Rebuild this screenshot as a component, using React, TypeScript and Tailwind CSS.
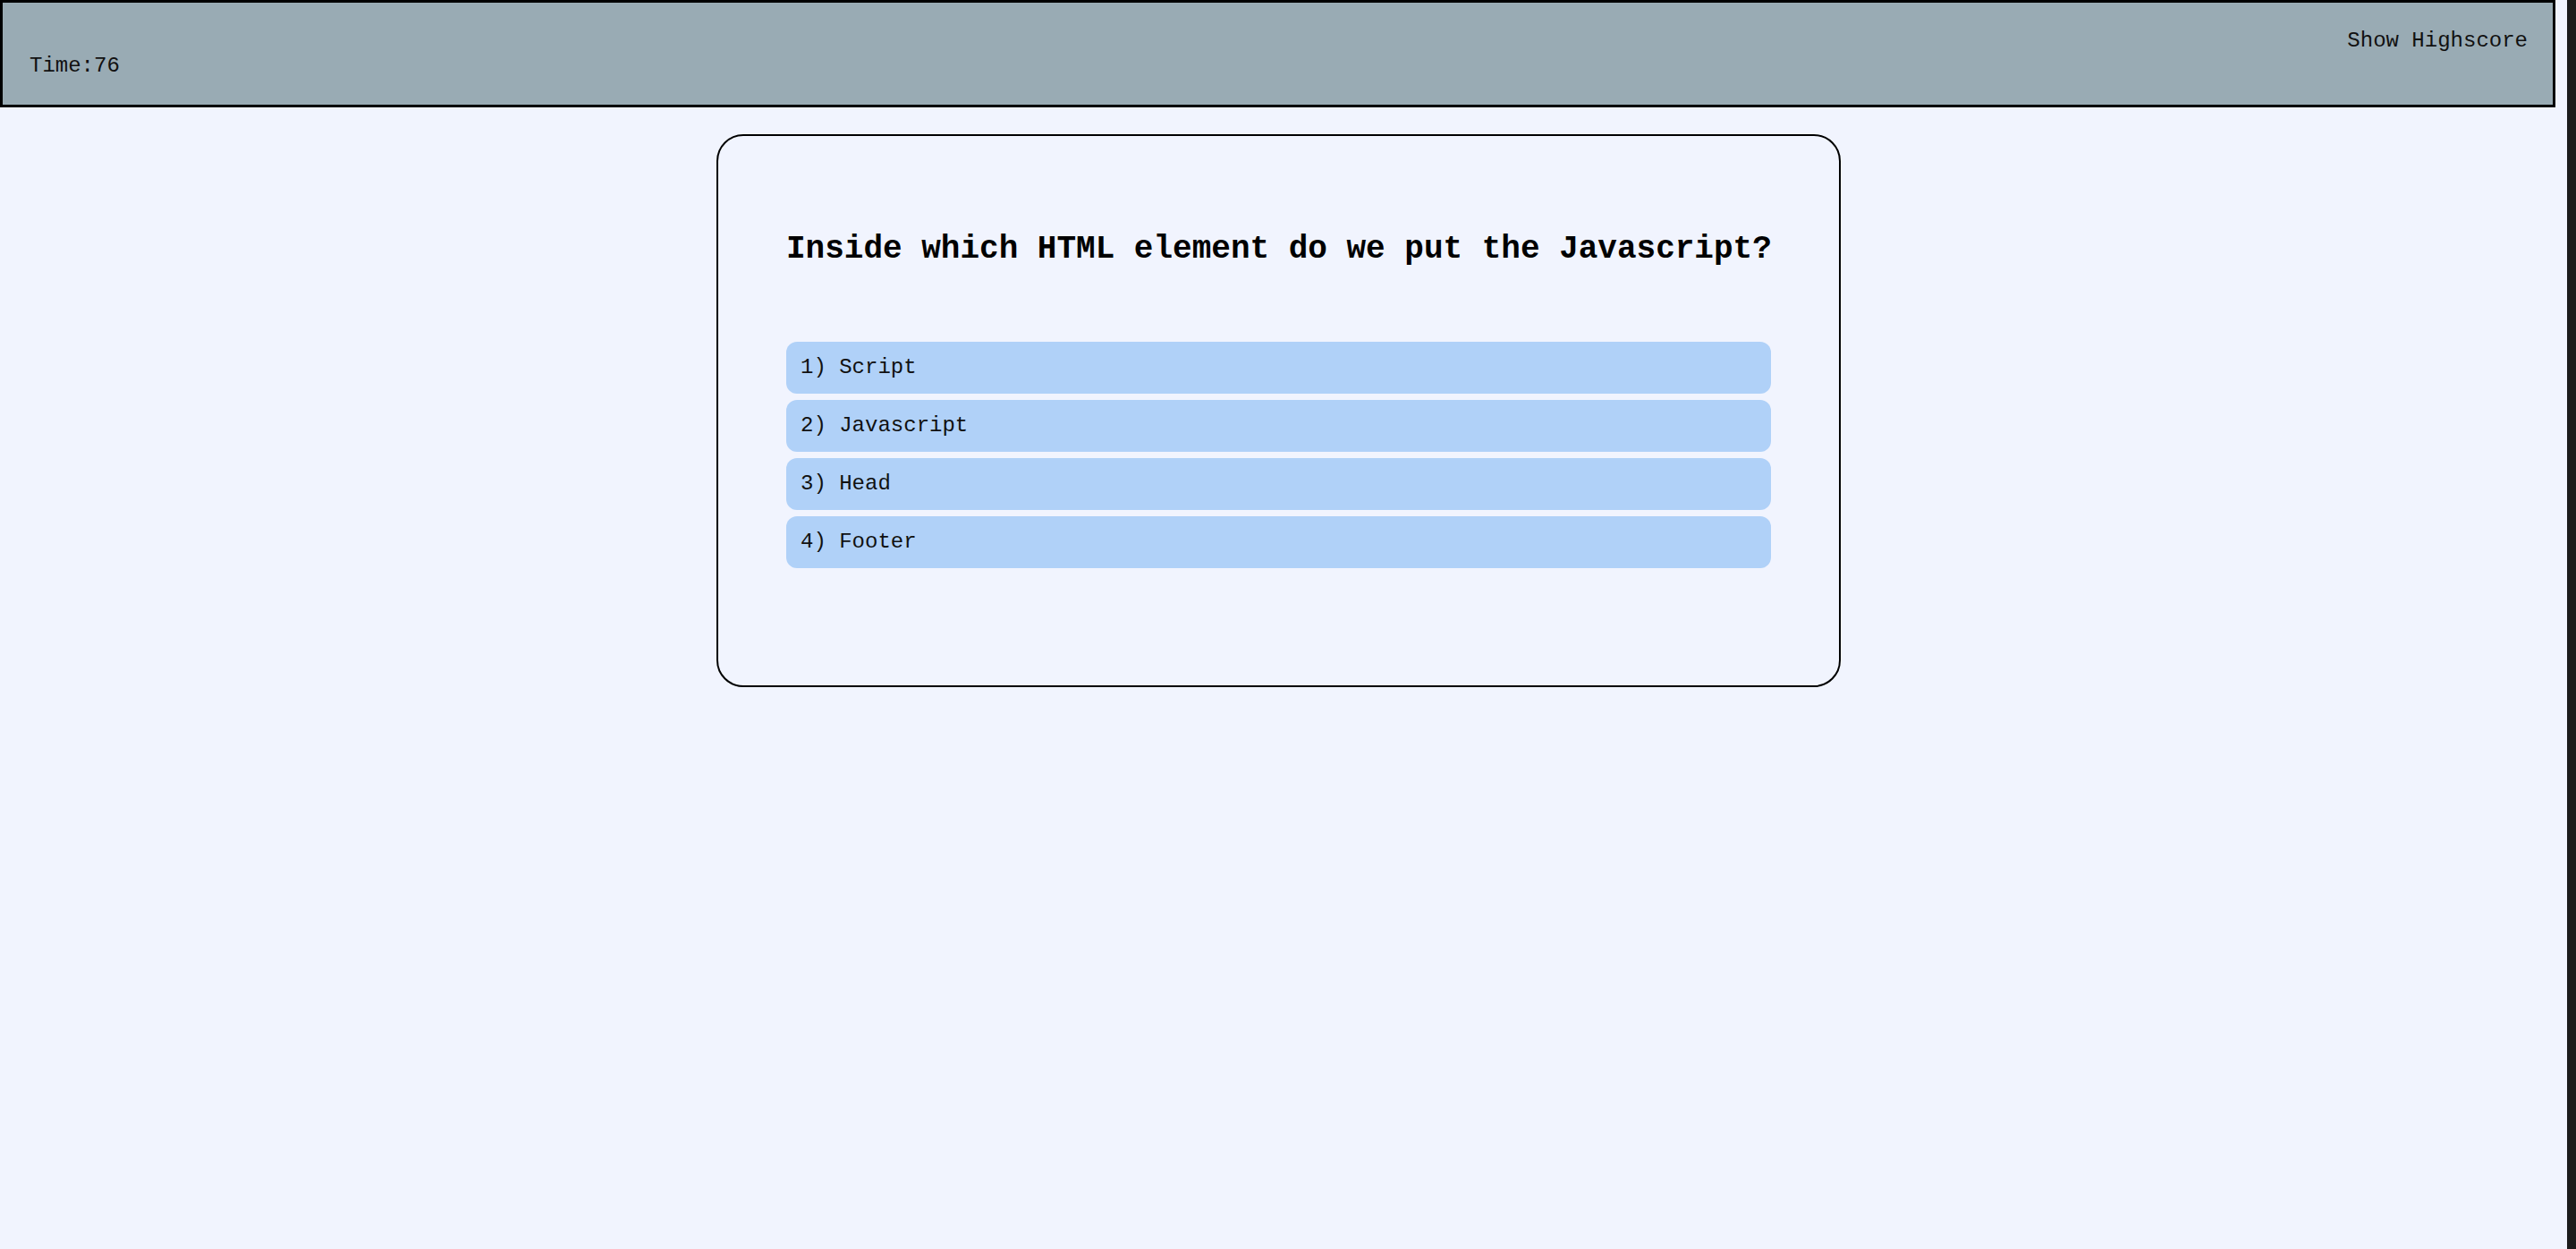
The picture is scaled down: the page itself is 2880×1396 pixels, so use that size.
import React from "react";

const options = ["Script", "Javascript", "Head", "Footer"];

export default function App() {
  return (
    <div
      className="flex min-h-screen bg-[#f1f4fe] text-[#111]"
      style={{ fontFamily: '"Liberation Mono", "Courier New", monospace' }}
    >
      <div className="w-[2857px] shrink-0">
        <header className="flex h-[120px] justify-between border-[3px] border-black bg-[#99abb4] pl-[30px] pr-[28px]">
          <div className="self-end pb-[30px] text-[24px] leading-[27px]">Time:76</div>
          <div className="self-start pt-[29px] text-[24px] leading-[27px]">Show Highscore</div>
        </header>
        <div className="pl-[2px]">
          <main className="mx-auto mt-[30px] w-[1257px] rounded-[30px] border-2 border-black px-[76px] pb-[131px] pt-[106px]">
            <h1 className="whitespace-nowrap text-[36px] font-bold leading-[41px] text-black">
              Inside which HTML element do we put the Javascript?
            </h1>
            <div className="mt-[83px] flex flex-col gap-[7px]">
              {options.map((o, i) => (
                <button
                  key={o}
                  className="flex h-[58px] items-center rounded-[12px] bg-[#b0d1f8] pl-[16px] text-left text-[24px] text-[#111]"
                >
                  {i + 1}) {o}
                </button>
              ))}
            </div>
          </main>
        </div>
      </div>
      <div className="flex-1" />
      <div className="w-[10px] shrink-0 bg-[#1b1b1b]" />
    </div>
  );
}
